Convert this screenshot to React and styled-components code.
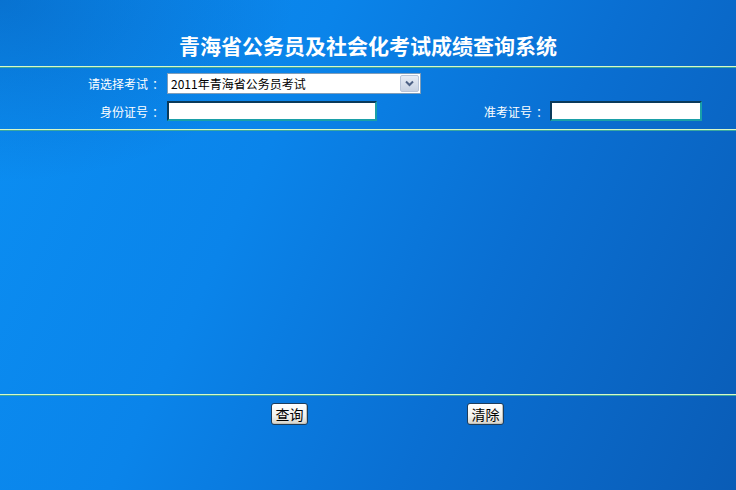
import React from 'react';
import styled, { createGlobalStyle } from 'styled-components';

const GlobalStyle = createGlobalStyle`
  html, body {
    margin: 0;
    padding: 0;
  }
  body {
    font-family: "Noto Sans CJK SC", "Liberation Sans", sans-serif;
    font-size: 12px;
  }
`;

const Page = styled.div`
  min-height: 100vh;
  background:
    radial-gradient(ellipse 420px 260px at 0 0, rgba(0, 40, 120, 0.28), transparent 70%),
    linear-gradient(115deg, #0b8ff3 0%, #0a84ea 35%, #0a6fd2 65%, #0a5cb6 100%);
  color: #fff;
`;

const Header = styled.div`
  height: 66px;
  box-sizing: border-box;
  padding-top: 35px;
  text-align: center;
`;

const Title = styled.h1`
  margin: 0;
  font-size: 21px;
  line-height: 21px;
  font-weight: bold;
  color: #fff;
`;

const Rule = styled.div`
  height: 1px;
  background: #d8f8c8;
  border-bottom: 1px solid #3aa8a0;
`;

const Form = styled.div`
  display: grid;
  grid-template-columns: 160px 310px 59px 1fr;
  column-gap: 7px;
  row-gap: 7px;
  align-items: center;
  padding: 5px 0 8px;
`;

const Label = styled.label`
  text-align: right;
  white-space: nowrap;
  font-size: 12px;
  color: #fff;
`;

// the full-width colon sits at the left of its box in Noto, nudge it right
const Colon = styled.span`
  display: inline-block;
  margin-left: 4px;
  margin-right: -4px;
`;

const SelectBox = styled.div`
  grid-column: 2 / span 3;
  display: flex;
  width: 254px;
  height: 21px;
  box-sizing: border-box;
  border: 1px solid #7f9db9;
  background: #fff;
`;

const Select = styled.select`
  flex: 1;
  appearance: none;
  border: 0;
  outline: 0;
  background: transparent;
  font-family: "Noto Sans CJK SC", sans-serif;
  font-size: 12px;
  color: #000;
  padding: 0 0 0 3px;
  margin: 0;
`;

const ArrowBox = styled.span`
  width: 17px;
  display: flex;
  align-items: center;
  justify-content: center;
  margin: 1px;
  border: 1px solid #b8c4d8;
  border-radius: 2px;
  background: linear-gradient(#e6ecf6, #c8d2e2);
  pointer-events: none;
`;

const TextInput = styled.input`
  width: ${(p) => p.$w}px;
  height: 20px;
  box-sizing: border-box;
  border: 2px solid;
  border-color: #0a3a5a #1aa0a8 #1aa0a8 #0a3a5a;
  background: #fff;
  padding: 0 3px;
  margin: 0;
  font-size: 12px;
  outline: 0;
`;

const ResultArea = styled.div`
  height: 263px;
`;

const ButtonRow = styled.div`
  display: flex;
  gap: 159px;
  padding: 7px 0 0 271px;
`;

const Button = styled.button`
  width: 37px;
  height: 22px;
  padding: 0;
  border: 1px solid #1e3c5a;
  border-radius: 3px;
  background: linear-gradient(#ffffff 0%, #f2f2ee 60%, #d6d4cc 100%);
  box-shadow: inset -1px -1px 0 #c4c2b8;
  font-family: "Noto Sans CJK SC", sans-serif;
  font-size: 14px;
  line-height: 18px;
  color: #000;
`;

export default function App() {
  return (
    <>
      <GlobalStyle />
      <Page>
        <Header>
          <Title>青海省公务员及社会化考试成绩查询系统</Title>
        </Header>
        <Rule />
        <Form>
          <Label>请选择考试<Colon>：</Colon></Label>
          <SelectBox>
            <Select defaultValue="2011">
              <option value="2011">2011年青海省公务员考试</option>
            </Select>
            <ArrowBox>
              <svg width="9" height="7" viewBox="0 0 9 7">
                <path d="M1 1.5 L4.5 5 L8 1.5" fill="none" stroke="#4d6185" strokeWidth="2" />
              </svg>
            </ArrowBox>
          </SelectBox>
          <Label>身份证号<Colon>：</Colon></Label>
          <TextInput $w={210} />
          <Label>准考证号<Colon>：</Colon></Label>
          <TextInput $w={152} />
        </Form>
        <Rule />
        <ResultArea />
        <Rule />
        <ButtonRow>
          <Button>查询</Button>
          <Button>清除</Button>
        </ButtonRow>
      </Page>
    </>
  );
}
